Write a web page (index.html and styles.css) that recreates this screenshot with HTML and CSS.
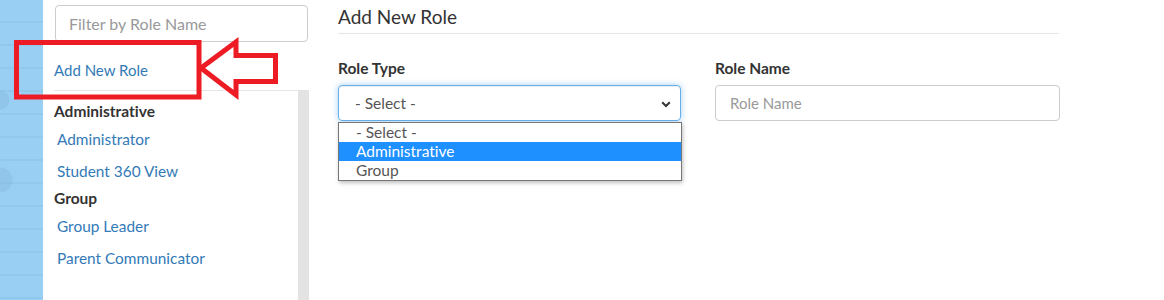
FILE: index.html
```html
<!DOCTYPE html>
<html lang="en">
<head>
<meta charset="utf-8">
<title>Roles</title>
<link rel="stylesheet" href="styles.css">
</head>
<body>
<div class="page">
  <div class="bg-strip"></div>
  <aside class="sidebar">
    <div class="filter-wrap">
      <input class="filter" type="text" placeholder="Filter by Role Name">
    </div>
    <a class="add-link" href="#">Add New Role</a>
    <div class="list-area">
      <ul class="role-list">
        <li class="group-title">Administrative</li>
        <li class="link"><a href="#">Administrator</a></li>
        <li class="link"><a href="#">Student 360 View</a></li>
        <li class="group-title">Group</li>
        <li class="link"><a href="#">Group Leader</a></li>
        <li class="link"><a href="#">Parent Communicator</a></li>
      </ul>
      <div class="scroll-strip"></div>
    </div>
  </aside>
  <main class="main">
    <h2 class="title">Add New Role</h2>
    <div class="form-row">
      <div class="field">
        <label class="label">Role Type</label>
        <div class="select-box">
          <span class="select-value">- Select -</span>
          <svg class="chevron" width="10" height="7" viewBox="0 0 10 7"><path d="M1.2 1.3 L5 5 L8.8 1.3" fill="none" stroke="#333" stroke-width="2"/></svg>
          <ul class="dropdown">
            <li>- Select -</li>
            <li class="active">Administrative</li>
            <li>Group</li>
          </ul>
        </div>
      </div>
      <div class="field">
        <label class="label">Role Name</label>
        <input class="text-input" type="text" placeholder="Role Name">
      </div>
    </div>
  </main>
  <svg class="annotation" width="300" height="110" viewBox="0 0 300 110">
    <rect x="16.5" y="42.5" width="182.5" height="54.5" fill="none" stroke="#ed1c24" stroke-width="5"/>
    <path d="M201 68 L236 42 L236 55.5 L275.5 55.5 L275.5 81.5 L236 81.5 L236 95 Z" fill="none" stroke="#ed1c24" stroke-width="5" stroke-linejoin="miter"/>
  </svg>
</div>
</body>
</html>
```

FILE: styles.css
```css
* { box-sizing: border-box; }
html, body { margin: 0; padding: 0; background: #fff; }
body {
  font-family: Lato, "Open Sans", Arial, sans-serif;
  color: #333;
  font-size: 15px;
  font-variant-ligatures: none;
}
.page {
  position: relative;
  display: flex;
  width: 1164px;
  height: 300px;
  overflow: hidden;
}
.bg-strip {
  width: 43px;
  flex: none;
  background-color: #98cff3;
  background-image:
    radial-gradient(circle at 0 100px, rgba(130,180,215,.35) 0, rgba(130,180,215,.35) 9px, transparent 10px),
    radial-gradient(circle at 0 180px, rgba(130,180,215,.35) 0, rgba(130,180,215,.35) 12px, transparent 13px),
    repeating-linear-gradient(to bottom, transparent 0, transparent 21px, #90c8ee 21px, #90c8ee 23px);
}
.sidebar {
  width: 266px;
  flex: none;
  display: flex;
  flex-direction: column;
}
.filter-wrap { padding: 5px 1px 0 12px; }
.filter {
  display: block;
  width: 253px;
  height: 37px;
  border: 1px solid #ccc;
  border-radius: 4px;
  padding: 0 13px;
  font: 16px Lato, sans-serif;
  font-variant-ligatures: none;
  color: #555;
}
.filter::placeholder { color: #999; }
.add-link {
  display: block;
  margin: 20px 0 0 11px;
  height: 28px;
  color: #337ab7;
  text-decoration: none;
  font-size: 15px;
  line-height: 16px;
}
.list-area {
  flex: 1;
  display: flex;
  margin-left: 11px;
}
.role-list {
  flex: 1;
  list-style: none;
  margin: 0;
  padding: 10px 0 0 0;
  border-top: 1px solid #e5e5e5;
}
.role-list li { line-height: 20px; }
.role-list li.group-title {
  font-weight: bold;
  color: #333;
  font-size: 15.5px;
  height: 28px;
}
.role-list li.link { height: 27px; }
.role-list li.link + li.link { margin-top: 5px; }
.role-list li a {
  display: block;
  padding-left: 3px;
  color: #337ab7;
  text-decoration: none;
  font-size: 15.4px;
}
.scroll-strip {
  width: 11px;
  background: #e3e3e3;
}
.main {
  width: 721px;
  margin-left: 29px;
  flex: none;
}
.title {
  margin: 0;
  padding: 6px 0 6px;
  font-size: 19px;
  font-weight: normal;
  line-height: 21px;
  color: #333;
  border-bottom: 1px solid #e5e5e5;
}
.form-row {
  display: grid;
  grid-template-columns: 343px 345px;
  column-gap: 34px;
  margin-top: 25px;
}
.label {
  display: block;
  font-weight: bold;
  font-size: 15.5px;
  line-height: 18px;
  margin-bottom: 8px;
}
.select-box {
  position: relative;
  height: 36px;
  border: 1px solid #66afe9;
  border-radius: 4px;
  box-shadow: inset 0 1px 1px rgba(0,0,0,.075), 0 0 6px rgba(102,175,233,.6);
  display: flex;
  align-items: center;
  padding: 0 0 0 16px;
}
.select-value { font-size: 15.5px; color: #555; }
.chevron { position: absolute; right: 9px; top: 15px; }
.dropdown {
  position: absolute;
  left: -1px;
  top: 36px;
  width: 344px;
  margin: 0;
  padding: 0;
  list-style: none;
  background: #fff;
  border: 1px solid #767676;
  box-shadow: 1px 2px 4px rgba(0,0,0,.25);
  z-index: 2;
}
.dropdown li {
  height: 19px;
  line-height: 19px;
  padding-left: 17px;
  font-size: 15.5px;
  color: #555;
}
.dropdown li.active { background: #1e90ff; color: #fff; }
.text-input {
  display: block;
  width: 345px;
  height: 36px;
  border: 1px solid #ccc;
  border-radius: 4px;
  padding: 0 14px;
  font: 15px Lato, sans-serif;
  font-variant-ligatures: none;
}
.text-input::placeholder { color: #999; }
.annotation {
  position: absolute;
  left: 0;
  top: 0;
  pointer-events: none;
}
```
